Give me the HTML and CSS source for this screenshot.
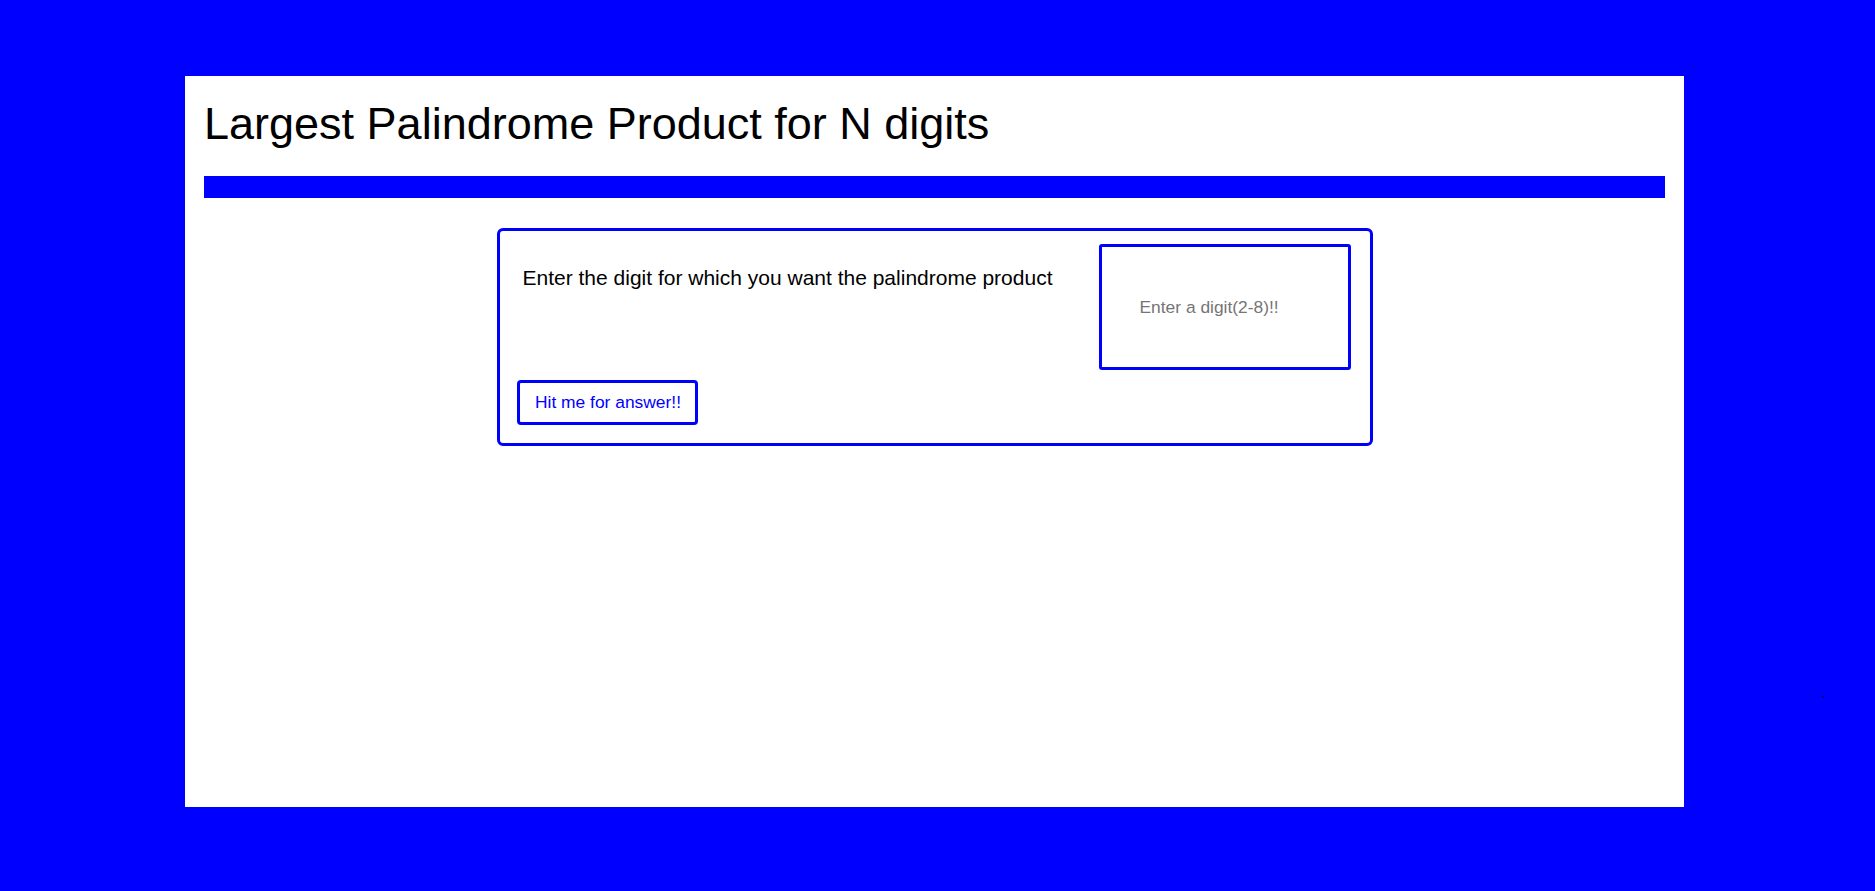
FILE: index.html
```html
<!DOCTYPE html>
<html>
<head>
<meta charset="utf-8">
<title>Largest Palindrome Product</title>
<link rel="stylesheet" href="styles.css">
</head>
<body>
<div class="page">
  <main class="panel">
    <h1 class="title">Largest Palindrome Product for N digits</h1>
    <div class="rule"></div>
    <form class="card" onsubmit="return false;">
      <div class="row">
        <label class="label" for="digit">Enter the digit for which you want the palindrome product</label>
        <input class="digit" id="digit" type="text" placeholder="Enter a digit(2-8)!!">
      </div>
      <button class="btn" type="button">Hit me for answer!!</button>
    </form>
  </main>
  <span class="dot"></span>
</div>
</body>
</html>
```
FILE: styles.css
```css
html, body {
  margin: 0;
  padding: 0;
  background: #0000ff;
  font-family: "Liberation Sans", Arial, sans-serif;
}
.page {
  position: relative;
  width: 1875px;
  height: 891px;
  padding: 76px 0 0 185px;
  box-sizing: border-box;
}
.panel {
  width: 1499px;
  height: 731px;
  background: #fff;
  padding: 0 19px;
  box-sizing: border-box;
  display: flex;
  flex-direction: column;
}
.title {
  margin: 0;
  padding-top: 23px;
  font-size: 45px;
  font-weight: normal;
  line-height: 50px;
  color: #000;
}
.rule {
  margin-top: 27px;
  height: 22px;
  background: #0000ff;
}
.card {
  align-self: center;
  width: 876px;
  margin-top: 30px;
  border: 3px solid #0000ff;
  border-radius: 6px;
  padding: 13px 19px 18px 17px;
  box-sizing: border-box;
  display: flex;
  flex-direction: column;
  gap: 10px;
}
.row {
  display: flex;
  justify-content: space-between;
  align-items: flex-start;
}
.label {
  margin: 22px 0 0 6px;
  font-size: 21px;
  line-height: 24px;
  color: #000;
}
.digit {
  width: 252px;
  height: 126px;
  box-sizing: border-box;
  border: 3px solid #0000ff;
  border-radius: 3px;
  padding: 0 0 0 38px;
  font-family: "Liberation Sans", Arial, sans-serif;
  font-size: 17.4px;
  outline: none;
}
.digit::placeholder {
  color: #757575;
}
.btn {
  align-self: flex-start;
  width: 181px;
  height: 45px;
  border: 3px solid #0000ff;
  border-radius: 4px;
  background: #fff;
  color: #0000ff;
  font-family: "Liberation Sans", Arial, sans-serif;
  font-size: 17.4px;
  padding: 0 0 0 2px;
}
.dot {
  position: absolute;
  left: 1822px;
  top: 696px;
  width: 2px;
  height: 2px;
  background: #000066;
}
```
